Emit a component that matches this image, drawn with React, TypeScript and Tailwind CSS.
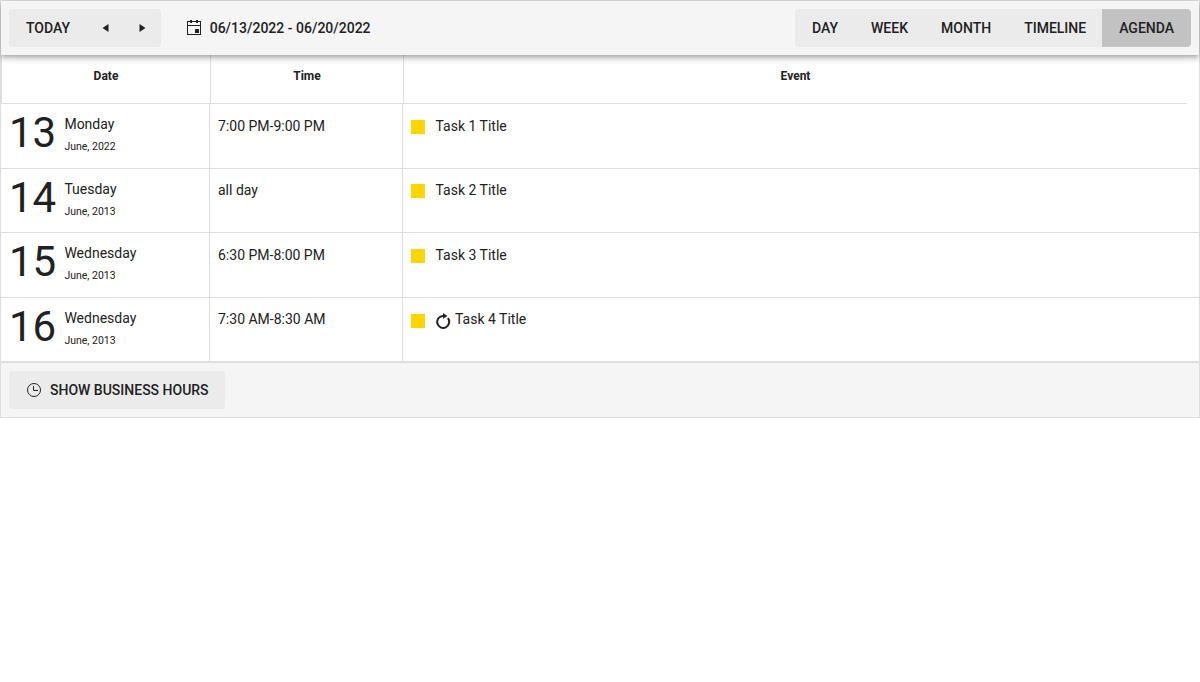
const views = ['Day', 'Week', 'Month', 'Timeline'];

const tasks = [
  { day: '13', weekday: 'Monday', month: 'June, 2022', time: '7:00 PM-9:00 PM', title: 'Task 1 Title', repeats: false },
  { day: '14', weekday: 'Tuesday', month: 'June, 2013', time: 'all day', title: 'Task 2 Title', repeats: false },
  { day: '15', weekday: 'Wednesday', month: 'June, 2013', time: '6:30 PM-8:00 PM', title: 'Task 3 Title', repeats: false },
  { day: '16', weekday: 'Wednesday', month: 'June, 2013', time: '7:30 AM-8:30 AM', title: 'Task 4 Title', repeats: true },
];

function CalendarIcon() {
  return (
    <svg width="16" height="16" viewBox="0 0 16 16" fill="#212121" shapeRendering="crispEdges">
      <path d="M1 1h14v14H1zM2 2v3h12V2zM2 6v8h12V6z" fillRule="evenodd" />
      <path d="M4 0h2v3H4zM10 0h2v3h-2zM9 9h4v4H9z" />
    </svg>
  );
}

function ClockIcon() {
  return (
    <svg width="16" height="16" viewBox="0 0 16 16" fill="none" stroke="#212121">
      <circle cx="8" cy="8" r="6.5" />
      <path d="M7.5 4v4.5H12" />
    </svg>
  );
}

function RepeatIcon() {
  return (
    <svg width="16" height="16" viewBox="0 0 16 16" fill="none">
      <path d="M9 2.9H8A6 6 0 1 0 12.9 5.2" stroke="#212121" strokeWidth="2" />
      <path d="M8 0l4.5 3L8 5.8z" fill="#212121" />
    </svg>
  );
}

export default function App() {
  return (
    <div className="flex h-[418px] w-full flex-col border border-[#dedede] bg-white font-['Roboto',sans-serif] text-sm leading-5 text-[#212121]">
      <header className="relative z-10 flex h-[54px] shrink-0 items-center bg-[#f5f5f5] px-2 font-medium shadow-[0_2px_4px_-1px_rgba(0,0,0,0.2),0_4px_5px_rgba(0,0,0,0.14),0_1px_10px_rgba(0,0,0,0.12)]">
        <div className="flex h-[38px] items-center rounded bg-[#ebebeb]">
          <button className="w-[78px] uppercase">Today</button>
          <button className="flex h-full w-[37px] items-center justify-center" aria-label="Previous">
            <svg width="16" height="16" viewBox="0 0 16 16"><path d="M10.5 4v8L4.5 8z" fill="#212121" /></svg>
          </button>
          <button className="flex h-full w-[37px] items-center justify-center" aria-label="Next">
            <svg width="16" height="16" viewBox="0 0 16 16"><path d="M4.5 4v8l6-4z" fill="#212121" /></svg>
          </button>
        </div>
        <button className="ml-[25px] flex items-center gap-2">
          <CalendarIcon />
          <span className="-ml-[0.3px]">06/13/2022 - 06/20/2022</span>
        </button>
        <nav className="ml-auto flex h-[38px] overflow-hidden rounded bg-[#ebebeb]">
          {views.map((view) => (
            <button key={view} className="pr-4 pl-[17px] uppercase">{view}</button>
          ))}
          <button className="bg-[#c2c2c2] px-[17px] uppercase">Agenda</button>
        </nav>
      </header>

      <div className="mr-3 flex h-[49px] shrink-0 border-b border-[#dedede] text-center text-xs leading-[42px] font-bold">
        <div className="w-[209px] border-l border-[#dedede]">Date</div>
        <div className="w-[193px] border-l border-[#dedede]">Time</div>
        <div className="flex-1 border-l border-[#dedede]">Event</div>
      </div>

      <div className="flex shrink-0 flex-col">
        {tasks.map((task) => (
          <div key={task.day} className="flex h-[64.5px] border-b border-[#dedede]">
            <div className="flex w-[208px] gap-[8.2px] pl-2">
              <span className="pt-2 text-[42px] leading-[42px]">{task.day}</span>
              <div className="pt-[10px]">
                <div>{task.weekday}</div>
                <div className="pt-[5px] text-[10.5px] leading-4">{task.month}</div>
              </div>
            </div>
            <div className="w-[193px] border-l border-[#dedede] pt-[11.6px] pl-2">{task.time}</div>
            <div className="flex flex-1 items-start border-l border-[#dedede] pt-[11.6px] pl-2">
              <span className={`mr-[10.5px] size-[14px] bg-[#ffd600] ${task.repeats ? 'mt-[5px]' : 'mt-1'}`} />
              {task.repeats && <span className="mt-1 mr-1 -ml-[0.5px]"><RepeatIcon /></span>}
              <span>{task.title}</span>
            </div>
          </div>
        ))}
      </div>

      <footer className="flex flex-1 items-center border-t border-[#dedede] bg-[#f5f5f5] px-2 font-medium">
        <button className="flex h-[38px] w-[216px] items-center gap-2 rounded bg-[#ebebeb] pl-[17px] uppercase">
          <ClockIcon />
          Show Business Hours
        </button>
      </footer>
    </div>
  );
}
